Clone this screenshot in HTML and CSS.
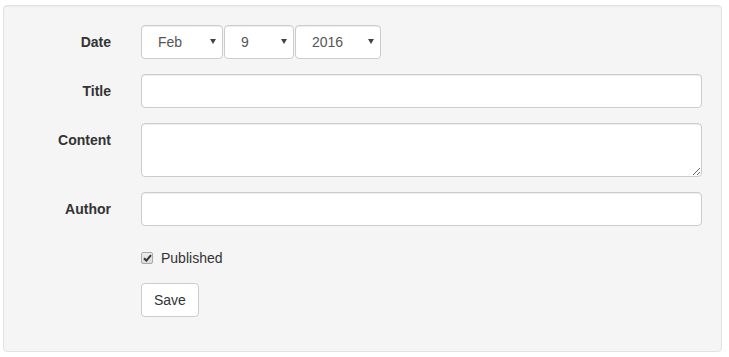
FILE: index.html
```html
<!DOCTYPE html>
<html>
<head>
<meta charset="utf-8">
<link rel="stylesheet" href="styles.css">
</head>
<body>
<div class="page">
  <form class="well">
    <div class="row">
      <label class="lbl">Date</label>
      <div class="field dates">
        <span class="sel sel-month"><select><option>Feb</option></select></span>
        <span class="sel sel-day"><select><option>9</option></select></span>
        <span class="sel sel-year"><select><option>2016</option></select></span>
      </div>
    </div>
    <div class="row">
      <label class="lbl">Title</label>
      <div class="field"><input class="ctl" type="text"></div>
    </div>
    <div class="row">
      <label class="lbl">Content</label>
      <div class="field"><textarea class="ctl area"></textarea></div>
    </div>
    <div class="row">
      <label class="lbl">Author</label>
      <div class="field"><input class="ctl" type="text"></div>
    </div>
    <div class="row">
      <div class="lbl"></div>
      <div class="field check"><label class="checklbl"><span class="box"><svg width="9" height="8" viewBox="0 0 9 8"><path d="M1 4.2 L3.4 6.6 L8 1.2" fill="none" stroke="#333" stroke-width="2"/></svg></span>Published</label></div>
    </div>
    <div class="row last">
      <div class="lbl"></div>
      <div class="field"><button type="button" class="btn">Save</button></div>
    </div>
  </form>
</div>
</body>
</html>
```
FILE: styles.css
```css
* { box-sizing: border-box; }
html, body { margin: 0; padding: 0; background: #fff; }
body {
  font-family: "Liberation Sans", Arial, sans-serif;
  font-size: 14px;
  line-height: 20px;
  color: #333;
}
.page { padding: 5px 7px 0 3px; }
.well {
  margin: 0;
  background: #f5f5f5;
  border: 1px solid #e3e3e3;
  border-radius: 4px;
  box-shadow: inset 0 1px 1px rgba(0,0,0,0.05);
  padding: 19px 19px 19px 19px;
}
.row {
  display: grid;
  grid-template-columns: 103px 1fr;
  column-gap: 15px;
  margin-bottom: 15px;
}
.lbl {
  text-align: right;
  font-weight: bold;
  padding: 7px 15px 0 0;
}
.field { min-width: 0; }
.dates { display: flex; gap: 1px; height: 34px; }
.sel { position: relative; display: block; height: 34px; flex: none; }
.sel::after {
  content: "";
  position: absolute;
  right: 7px;
  top: 14px;
  border-left: 3px solid transparent;
  border-right: 3px solid transparent;
  border-top: 5px solid #444;
  pointer-events: none;
}
.sel select {
  -webkit-appearance: none;
  appearance: none;
  display: block;
  height: 34px;
  width: 100%;
  font-family: inherit;
  font-size: 14px;
  color: #555;
  background: #fff;
  border: 1px solid #ccc;
  border-radius: 4px;
  box-shadow: inset 0 1px 1px rgba(0,0,0,0.075);
  padding: 0 0 0 16px;
  margin: 0;
}
.sel-month { width: 82px; }
.sel-day { width: 70px; }
.sel-year { width: 86px; }
.ctl {
  display: block;
  width: 561px;
  height: 34px;
  padding: 6px 12px;
  font-family: inherit;
  font-size: 14px;
  color: #555;
  background: #fff;
  border: 1px solid #ccc;
  border-radius: 4px;
  box-shadow: inset 0 1px 1px rgba(0,0,0,0.075);
  margin: 0;
}
.area { height: 54px; resize: vertical; }
.check { padding-top: 7px; min-height: 27px; }
.checklbl {
  display: flex;
  align-items: center;
  height: 20px;
  font-weight: normal;
}
.box {
  width: 12px;
  height: 12px;
  margin: 0 8px 0 0;
  border: 1px solid #a9a9a9;
  border-radius: 2px;
  background: linear-gradient(#ececec, #dcdcdc);
  display: flex;
  align-items: center;
  justify-content: center;
}
.box svg { display: block; }
.btn {
  display: block;
  height: 34px;
  padding: 6px 12px;
  font-family: inherit;
  font-size: 14px;
  line-height: 20px;
  color: #333;
  background: #fff;
  border: 1px solid #ccc;
  border-radius: 4px;
  margin: 0;
}
```
